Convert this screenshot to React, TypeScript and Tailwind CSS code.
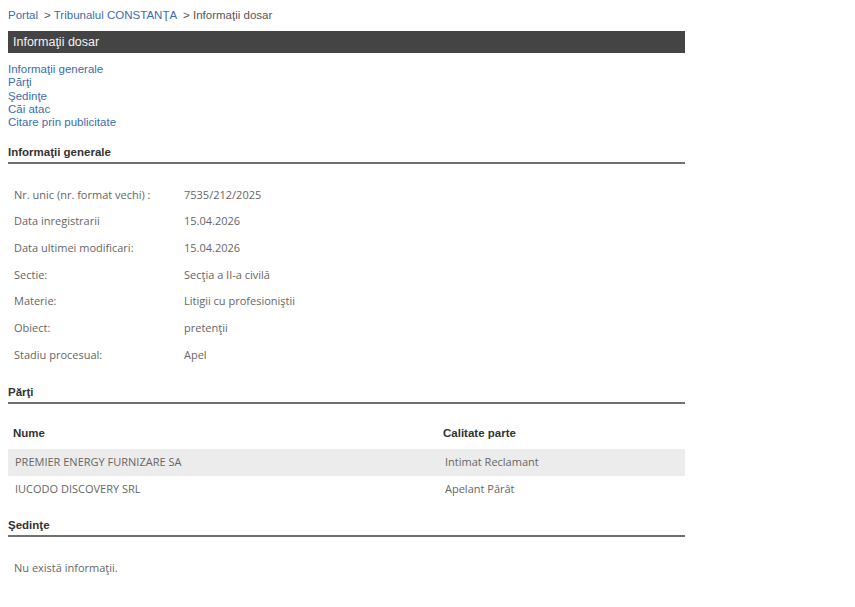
const links = [
  "Informaţii generale",
  "Părţi",
  "Şedinţe",
  "Căi atac",
  "Citare prin publicitate",
];

const info = [
  ["Nr. unic (nr. format vechi) :", "7535/212/2025"],
  ["Data inregistrarii", "15.04.2026"],
  ["Data ultimei modificari:", "15.04.2026"],
  ["Sectie:", "Secţia a II-a civilă"],
  ["Materie:", "Litigii cu profesioniştii"],
  ["Obiect:", "pretenţii"],
  ["Stadiu procesual:", "Apel"],
];

const parti = [
  ["PREMIER ENERGY FURNIZARE SA", "Intimat Reclamant"],
  ["IUCODO DISCOVERY SRL", "Apelant Pârât"],
];

const Heading = ({ title }: { title: string }) => (
  <div className="border-b-2 border-[#707070] pb-[3px]">
    <h2 className="font-['Liberation_Sans',Arial,sans-serif] text-[11.5px] leading-[14px] font-bold text-[#333]">
      {title}
    </h2>
  </div>
);

export default function App() {
  return (
    <div className="min-h-screen bg-white pl-2 pt-2 font-['Open_Sans',sans-serif]">
      <div className="w-[677px]">
        {/* breadcrumb */}
        <div className="font-['Liberation_Sans',Arial,sans-serif] text-[11.5px] leading-[14px] text-[#555]">
          <a className="text-[#406cae]">Portal</a>
          <span className="ml-[6px]">&gt; </span>
          <a className="text-[#406cae]">Tribunalul CONSTANŢA</a>
          <span className="ml-[6px]">&gt; Informaţii dosar</span>
        </div>

        <div className="mt-[9px] flex h-[22px] items-center bg-[#444] px-[5px] font-['Liberation_Sans',Arial,sans-serif] text-[12.5px] text-[#f2f2f2]">
          Informaţii dosar
        </div>

        <div className="mt-[10px] flex flex-col font-['Liberation_Sans',Arial,sans-serif] text-[11.5px] leading-[13.3px] text-[#406cae]">
          {links.map((l) => (
            <a key={l}>{l}</a>
          ))}
        </div>

        {/* Informatii generale */}
        <div className="mt-[16px]">
          <Heading title="Informaţii generale" />
        </div>
        <div className="mt-[17px] text-[11px] text-[#666]">
          {info.map(([k, v]) => (
            <div key={k} className="flex h-[26.67px] items-center pl-[6px]">
              <span className="w-[170px]">{k}</span>
              <span>{v}</span>
            </div>
          ))}
        </div>

        {/* Parti */}
        <div className="mt-[17px]">
          <Heading title="Părţi" />
        </div>
        <div className="mt-[16px] flex flex-col text-[11px]">
          <div className="mb-[2px] flex h-[27px] items-center font-['Liberation_Sans',Arial,sans-serif] text-[11.5px] font-bold text-[#333]">
            <span className="w-[435px] pl-[5px]">Nume</span>
            <span>Calitate parte</span>
          </div>
          {parti.map(([n, c], i) => (
            <div
              key={n}
              className={`flex h-[27px] items-center text-[#666] ${i === 0 ? "bg-[#ececec]" : ""}`}
            >
              <span className="w-[437px] pl-[7px]">{n}</span>
              <span>{c}</span>
            </div>
          ))}
        </div>

        {/* Sedinte */}
        <div className="mt-[15px]">
          <Heading title="Şedinţe" />
        </div>
        <div className="mt-[23px] pl-[6px] text-[11px] text-[#666]">
          Nu există informaţii.
        </div>
      </div>
    </div>
  );
}
